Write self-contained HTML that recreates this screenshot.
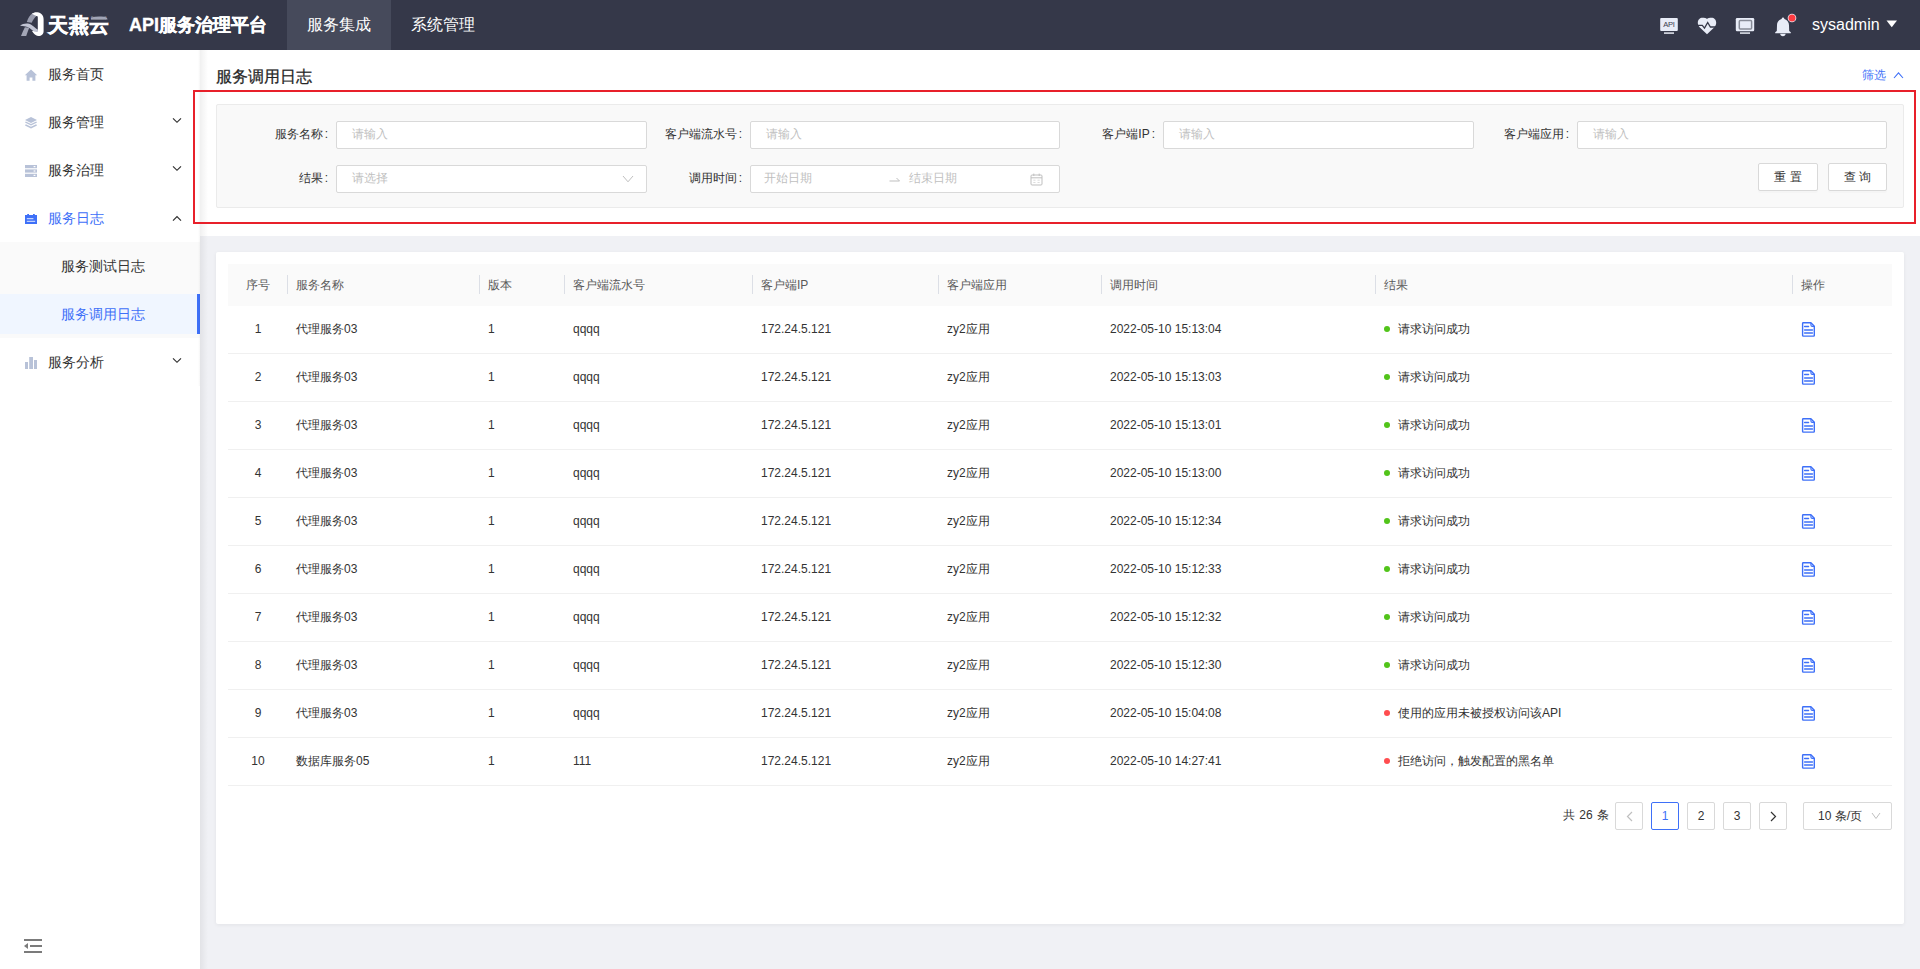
<!DOCTYPE html>
<html><head><meta charset="utf-8">
<style>
*{box-sizing:border-box;margin:0;padding:0}
html,body{width:1920px;height:969px;overflow:hidden;font-family:"Liberation Sans",sans-serif;background:#f0f1f5;color:#333}
.abs{position:absolute}
#hdr{position:absolute;left:0;top:0;width:1920px;height:50px;background:#353849}
#side{position:absolute;left:0;top:50px;width:200px;height:919px;background:#fff;z-index:2}
#sideshadow{position:absolute;left:200px;top:50px;width:8px;height:919px;background:linear-gradient(to right,rgba(0,0,0,.06),rgba(0,0,0,0));z-index:3}
.mi{position:absolute;left:0;width:200px;height:40px;line-height:40px;font-size:14px;color:#333}
.mi .t{position:absolute;left:48px;top:0}
.mi .ic{position:absolute;left:25px;top:14px;width:12px;height:12px}
.mi .ar{position:absolute;left:172px;top:16px;width:10px;height:8px}
#topp{position:absolute;left:200px;top:50px;width:1720px;height:186px;background:#fff}
.card{position:absolute;background:#fff;border-radius:2px}
.lbl{position:absolute;font-size:12px;color:#333;line-height:28px;text-align:right;margin-top:-1px}
.colon{margin:0 8px 0 2px}
.inp{position:absolute;height:28px;background:#fff;border:1px solid #d9d9d9;border-radius:2px;font-size:12px;color:#bfbfbf;line-height:24px;padding-left:15px}
.btn{position:absolute;height:28px;background:#fff;border:1px solid #d9d9d9;border-radius:2px;font-size:12px;color:#333;line-height:26px;text-align:center;box-shadow:0 2px 0 rgba(0,0,0,.015)}
.th{position:absolute;top:264px;height:42px;line-height:42px;font-size:12px;color:#595959}
.sep{position:absolute;top:275px;width:1px;height:19px;background:#dcdfe6}
.td{position:absolute;font-size:12px;color:#333;line-height:18px}
.rowb{position:absolute;left:228px;width:1664px;height:1px;background:#f0f0f0}
.pg{position:absolute;top:802px;width:28px;height:28px;border:1px solid #d9d9d9;border-radius:2px;background:#fff;font-size:12px;line-height:26px;text-align:center;color:#333}
</style></head><body>
<div id="hdr">
  <!-- logo -->
  <svg class="abs" style="left:18px;top:9px" width="28" height="30" viewBox="0 0 28 30">
    <path d="M8.8 12.9 C10 9.2 12 5.9 14.6 4.3 L18.6 7 C16.6 8.6 14.9 11 13.7 13.8 Z" fill="#9a9dae"/>
    <path d="M3 26.9 C4.2 23.8 5.4 21 6.9 18.3 L11.2 18.8 C10.2 21.4 9.2 24 8.2 26.9 Z" fill="#a3a6b6"/>
    <path d="M13.8 4.8 C15.5 3.4 17.5 3 19.5 3.3 C23.2 3.8 25.6 6.5 25.6 10.2 V22.2 C25.6 25.2 23.4 27 20.6 27 C18.4 27 16.6 25.8 15.2 23.8 L14 22 L19.8 21.4 V8.4 C19.8 7.2 19 6.6 18.2 7.1 Z" fill="#ffffff"/>
    <path d="M2 16.7 C5 14.4 10 13.7 13.6 15.9 C16 17.3 17.8 19.6 19.8 20.6 L19.8 22.9 C17.5 23.5 15.6 22.7 14 21.1 C12 19.1 10 17.9 7.6 17.5 C5.6 17.1 3.8 17 2 16.7 Z" fill="#c1c4d3"/>
  </svg>
  <div class="abs" style="left:48px;top:13px;font-size:20px;font-weight:bold;color:#fff;line-height:24px;letter-spacing:0.6px;-webkit-text-stroke:0.5px #fff">天燕云</div>
  <svg class="abs" style="left:88px;top:14px" width="22" height="8" viewBox="0 0 22 8"><path d="M3 3.2 C7 2.2 12 2.2 16 2.6 C18 2.8 19.2 3.2 19.6 5.4 C15 5 9 4.8 3 5.4 Z" fill="#353849"/><path d="M3 3.4 C7 2.4 12 2.4 16 2.8 C18 3 19.2 3.6 19.6 5.6 C15 5.2 9 5 3 5.6 Z" fill="#a1a5b6"/></svg>
  <div class="abs" style="left:129px;top:13px;font-size:18px;font-weight:bold;color:#fff;line-height:24px;-webkit-text-stroke:0.3px #fff">API服务治理平台</div>
  <div class="abs" style="left:287px;top:0;width:104px;height:50px;background:#464a5b"></div>
  <div class="abs" style="left:307px;top:0;font-size:16px;color:#fff;line-height:50px">服务集成</div>
  <div class="abs" style="left:411px;top:0;font-size:16px;color:#fff;line-height:50px">系统管理</div>
  <div class="abs" style="left:1812px;top:0;font-size:16px;color:#fff;line-height:50px">sysadmin</div>
  <svg class="abs" style="left:1660px;top:17px" width="18" height="18" viewBox="0 0 18 18">
    <rect x="0.2" y="1" width="17.6" height="13" rx="1" fill="#e8ecf7"/>
    <text x="9" y="10" text-anchor="middle" font-family="Liberation Sans" font-size="7.6" fill="#3c4050" letter-spacing="-0.3">API</text>
    <rect x="4" y="15.2" width="10" height="1.8" fill="#c9ccd6"/>
  </svg>
  <svg class="abs" style="left:1697px;top:17px" width="20" height="18" viewBox="0 0 20 18">
    <path d="M10 1.9 C8.8 1 7.4 0.8 5.6 0.8 C2.8 0.8 0.8 2.8 0.8 5.8 C0.8 7.6 1.6 9 2.6 10.2 L10 17.2 L17.4 10.2 C18.4 9 19.2 7.6 19.2 5.8 C19.2 2.8 17.2 0.8 14.4 0.8 C12.6 0.8 11.2 1 10 1.9 Z" fill="#e8ecf7"/>
    <path d="M0 8.4 H5.3 L7.5 11.1 L10.7 5.5 L13.4 10 H20" fill="none" stroke="#353849" stroke-width="1.3" stroke-linejoin="miter"/>
  </svg>
  <svg class="abs" style="left:1735px;top:17px" width="20" height="18" viewBox="0 0 20 18">
    <rect x="0.8" y="1" width="18.4" height="13.2" rx="1.2" fill="#e8ecf7"/>
    <rect x="4.3" y="3.5" width="12.3" height="8.6" rx="1" fill="none" stroke="#878b97" stroke-width="1.5"/>
    <rect x="5" y="15.2" width="10" height="1.8" fill="#c9ccd6"/>
  </svg>
  <svg class="abs" style="left:1773px;top:10px" width="26" height="28" viewBox="0 0 26 28">
    <path d="M10 7.6 C10.8 7.6 11.1 8.2 11.4 8.9 C14.4 9.9 16 12.2 16 15.2 L16.2 21 L17.8 22.2 V23.2 H2.2 V22.2 L3.8 21 L4 15.2 C4 12.2 5.6 9.9 8.6 8.9 C8.9 8.2 9.2 7.6 10 7.6 Z" fill="#e8ecf7"/>
    <path d="M7.2 23.8 H12.6 C12.6 25.5 11.5 26.2 9.9 26.2 C8.3 26.2 7.2 25.5 7.2 23.8 Z" fill="#e8ecf7"/>
    <circle cx="19" cy="8" r="4.3" fill="#e8ecf7"/>
    <circle cx="19" cy="8" r="3.5" fill="#ff3b41"/>
  </svg>
  <svg class="abs" style="left:1886px;top:20px" width="12" height="8" viewBox="0 0 12 8">
    <path d="M0.5 0.6 H11 L5.75 7.2 Z" fill="#fff"/>
  </svg>

</div>

<div id="side">
  <div class="mi" style="top:4px"><span class="t">服务首页</span></div>
  <div class="mi" style="top:52px"><span class="t">服务管理</span></div>
  <div class="mi" style="top:100px"><span class="t">服务治理</span></div>
  <div class="mi" style="top:148px;color:#3e70f8"><span class="t">服务日志</span></div>
  <div class="abs" style="left:0;top:192px;width:200px;height:96px;background:#fafafa"></div>
  <div class="mi" style="top:196px"><span class="t" style="left:61px">服务测试日志</span></div>
  <div class="mi" style="top:244px;background:#f0f6ff;color:#3e70f8"><span class="t" style="left:61px">服务调用日志</span><div class="abs" style="left:197px;top:0;width:3px;height:40px;background:#3e70f8"></div></div>
  <div class="mi" style="top:292px"><span class="t">服务分析</span></div>
<svg class="abs" style="left:24px;top:19px" width="14" height="12" viewBox="0 0 14 12"><path d="M7 0.4 L13.2 6.2 H11.4 V11.8 H8.4 V8.4 H5.6 V11.8 H2.6 V6.2 H0.8 Z" fill="#b8c2d8"/></svg><svg class="abs" style="left:25px;top:66px" width="12" height="13" viewBox="0 0 12 13"><path d="M6 1 L12 4 L6 7 L0 4 Z" fill="#b8c2d8"/><path d="M0.8 5.4 L6 8 L11.2 5.4 L12 6.6 L6 9.6 L0 6.6 Z" fill="#b8c2d8"/><path d="M0.8 8.2 L6 10.8 L11.2 8.2 L12 9.4 L6 12.4 L0 9.4 Z" fill="#b8c2d8"/></svg><svg class="abs" style="left:25px;top:115px" width="12" height="12" viewBox="0 0 12 12"><rect x="0" y="0" width="12" height="3.2" fill="#b8c2d8"/><rect x="0" y="4.4" width="12" height="3.2" fill="#b8c2d8"/><rect x="0" y="8.8" width="12" height="3.2" fill="#b8c2d8"/><rect x="8.6" y="1" width="1.8" height="1.2" fill="#fff"/><rect x="8.6" y="5.4" width="1.8" height="1.2" fill="#fff"/><rect x="8.6" y="9.8" width="1.8" height="1.2" fill="#fff"/></svg><svg class="abs" style="left:25px;top:163px" width="12" height="12" viewBox="0 0 12 12"><path d="M0 2 H2.2 V1 H4 V2 H8 V1 H9.8 V2 H12 V11 H0 Z" fill="#3e70f8"/><rect x="1.8" y="5.2" width="6.6" height="1" fill="#fff" opacity=".85"/><rect x="1.8" y="7.8" width="8.4" height="1" fill="#fff" opacity=".85"/></svg><svg class="abs" style="left:25px;top:307px" width="12" height="12" viewBox="0 0 12 12"><rect x="0" y="5" width="3" height="7" fill="#b8c2d8"/><rect x="4.2" y="0" width="3.8" height="12" fill="#b8c2d8"/><rect x="9" y="3" width="3" height="9" fill="#b8c2d8"/></svg><svg class="abs" style="left:172px;top:67px" width="10" height="7" viewBox="0 0 10 7"><path d="M1 1.3 L5 5.3 L9 1.3" fill="none" stroke="#2e2e2e" stroke-width="1.15"/></svg><svg class="abs" style="left:172px;top:115px" width="10" height="7" viewBox="0 0 10 7"><path d="M1 1.3 L5 5.3 L9 1.3" fill="none" stroke="#2e2e2e" stroke-width="1.15"/></svg><svg class="abs" style="left:172px;top:165px" width="10" height="7" viewBox="0 0 10 7"><path d="M1 5.6 L5 1.6 L9 5.6" fill="none" stroke="#2e2e2e" stroke-width="1.15"/></svg><svg class="abs" style="left:172px;top:307px" width="10" height="7" viewBox="0 0 10 7"><path d="M1 1.3 L5 5.3 L9 1.3" fill="none" stroke="#2e2e2e" stroke-width="1.15"/></svg>
</div>
<div id="sideshadow"></div>
<div class="abs" style="left:198px;top:50px;width:2px;height:336px;background:linear-gradient(to right,rgba(0,0,0,0),rgba(0,0,0,.035));z-index:3"></div>

<div id="topp">
  <div class="abs" style="left:16px;top:15px;font-size:16px;color:#262626;line-height:24px;-webkit-text-stroke:0.25px #262626">服务调用日志</div>
  <div class="abs" style="left:1662px;top:16px;font-size:12px;color:#3e70f8;line-height:18px">筛选</div><svg class="abs" style="left:1693px;top:21px" width="11" height="8" viewBox="0 0 11 8"><path d="M1 7 L5.5 1.8 L10 7" fill="none" stroke="#3e70f8" stroke-width="1.1"/></svg>
</div>

<!-- filter box -->
<div class="abs" style="left:216px;top:104px;width:1688px;height:104px;background:#f9f9f9;border:1px solid #ebebeb;border-radius:2px"></div>
<div class="lbl" style="left:226px;top:121px;width:110px">服务名称<span class="colon">:</span></div>
<div class="inp" style="left:336px;top:121px;width:311px">请输入</div>
<div class="lbl" style="left:640px;top:121px;width:110px">客户端流水号<span class="colon">:</span></div>
<div class="inp" style="left:750px;top:121px;width:310px">请输入</div>
<div class="lbl" style="left:1053px;top:121px;width:110px">客户端IP<span class="colon">:</span></div>
<div class="inp" style="left:1163px;top:121px;width:311px">请输入</div>
<div class="lbl" style="left:1467px;top:121px;width:110px">客户端应用<span class="colon">:</span></div>
<div class="inp" style="left:1577px;top:121px;width:310px">请输入</div>
<div class="lbl" style="left:226px;top:165px;width:110px">结果<span class="colon">:</span></div>
<div class="inp" style="left:336px;top:165px;width:311px">请选择<svg class="abs" style="left:285px;top:9px" width="12" height="8" viewBox="0 0 12 8"><path d="M1 1 L6 6.8 L11 1" fill="none" stroke="#bfbfbf" stroke-width="1"/></svg></div>
<div class="lbl" style="left:640px;top:165px;width:110px">调用时间<span class="colon">:</span></div>
<div class="inp" style="left:750px;top:165px;width:310px;padding-left:0"><span style="position:absolute;left:13px">开始日期</span><svg class="abs" style="left:138px;top:10px" width="12" height="6" viewBox="0 0 12 6"><path d="M0.5 5 H10.5 L7.5 2" fill="none" stroke="#bfbfbf" stroke-width="1"/></svg><span style="position:absolute;left:158px">结束日期</span><svg class="abs" style="left:279px;top:7px" width="13" height="13" viewBox="0 0 13 13"><rect x="1" y="2" width="11" height="10" rx="1" fill="none" stroke="#bfbfbf" stroke-width="1"/><path d="M1 4.8 H12 M3.8 0.6 V3 M9.2 0.6 V3" stroke="#bfbfbf" stroke-width="1"/><path d="M3.3 7.2 H5.5 M7.5 7.2 H9.7 M3.3 9.5 H5.5 M7.5 9.5 H9.7" stroke="#d9d9d9" stroke-width="0.9"/></svg></div>
<div class="btn" style="left:1758px;top:163px;width:60px">重 置</div>
<div class="btn" style="left:1828px;top:163px;width:59px">查 询</div>

<!-- red annotation -->
<div class="abs" style="left:193px;top:90px;width:1723px;height:134px;border:2px solid #e8202a;z-index:5"></div>

<!-- table card -->
<div class="card" style="left:216px;top:252px;width:1688px;height:672px;box-shadow:0 1px 4px rgba(0,0,0,.06)"></div>
<div class="abs" style="left:228px;top:264px;width:1664px;height:42px;background:#fafafa"></div>

<!-- pagination -->
<div class="abs" style="left:1563px;top:801px;font-size:12px;line-height:28px;color:#333;word-spacing:1px">共 26 条</div>
<div class="pg" style="left:1615px"><svg style="position:absolute;left:9px;top:8px" width="9" height="11" viewBox="0 0 9 11"><path d="M7 1 L2.5 5.5 L7 10" fill="none" stroke="#bfbfbf" stroke-width="1.2"/></svg></div>
<div class="pg" style="left:1651px;border-color:#3e70f8;color:#3e70f8">1</div>
<div class="pg" style="left:1687px">2</div>
<div class="pg" style="left:1723px">3</div>
<div class="pg" style="left:1759px"><svg style="position:absolute;left:9px;top:8px" width="9" height="11" viewBox="0 0 9 11"><path d="M2 1 L6.5 5.5 L2 10" fill="none" stroke="#333" stroke-width="1.2"/></svg></div>
<div class="pg" style="left:1803px;width:89px;text-align:left;padding-left:14px;color:#333">10 条/页<svg style="position:absolute;left:67px;top:9px" width="11" height="8" viewBox="0 0 11 8"><path d="M1 1 L5 6.5 L9 1" fill="none" stroke="#bfbfbf" stroke-width="1"/></svg></div>
<!-- collapse icon -->
<svg class="abs" style="left:24px;top:939px;z-index:4" width="18" height="14" viewBox="0 0 18 14"><rect x="0" y="0" width="18" height="2" fill="#7b7b7b"/><rect x="6" y="6" width="12" height="2" fill="#7b7b7b"/><rect x="0" y="12" width="18" height="2" fill="#7b7b7b"/><path d="M0 7 L4 4 V10 Z" fill="#7b7b7b"/></svg>
<!--TBL-->
<div class="th" style="left:228px;width:60px;text-align:center">序号</div>
<div class="th" style="left:296px">服务名称</div>
<div class="th" style="left:488px">版本</div>
<div class="th" style="left:573px">客户端流水号</div>
<div class="th" style="left:761px">客户端IP</div>
<div class="th" style="left:947px">客户端应用</div>
<div class="th" style="left:1110px">调用时间</div>
<div class="th" style="left:1384px">结果</div>
<div class="th" style="left:1801px">操作</div>
<div class="sep" style="left:287px"></div>
<div class="sep" style="left:479px"></div>
<div class="sep" style="left:564px"></div>
<div class="sep" style="left:752px"></div>
<div class="sep" style="left:938px"></div>
<div class="sep" style="left:1101px"></div>
<div class="sep" style="left:1375px"></div>
<div class="sep" style="left:1792px"></div>
<div class="td" style="left:228px;top:320px;width:60px;text-align:center">1</div>
<div class="td" style="left:296px;top:320px">代理服务03</div>
<div class="td" style="left:488px;top:320px">1</div>
<div class="td" style="left:573px;top:320px">qqqq</div>
<div class="td" style="left:761px;top:320px">172.24.5.121</div>
<div class="td" style="left:947px;top:320px">zy2应用</div>
<div class="td" style="left:1110px;top:320px">2022-05-10 15:13:04</div>
<div class="abs" style="left:1384px;top:326px;width:6px;height:6px;border-radius:50%;background:#52c41a"></div>
<div class="td" style="left:1398px;top:320px">请求访问成功</div>
<div class="abs" style="left:1801px;top:321px;width:15px;height:17px"><svg width="15" height="17" viewBox="0 0 15 17"><path d="M1.6 2.4 Q1.6 1.7 2.3 1.7 H9.9 L13.3 5.3 V14.4 Q13.3 15.1 12.6 15.1 H2.3 Q1.6 15.1 1.6 14.4 Z" fill="none" stroke="#3e70f8" stroke-width="1.4" stroke-linejoin="round"/><path d="M9.9 1.9 V4.1 Q9.9 5.4 11.2 5.4 H13.2" fill="none" stroke="#3e70f8" stroke-width="1.1"/><path d="M3.6 5.5 H7.6 M3.6 9 H11.5 M3.6 12 H11.5" stroke="#3e70f8" stroke-width="1.3" stroke-linecap="round"/></svg></div>
<div class="rowb" style="top:353px"></div>
<div class="td" style="left:228px;top:368px;width:60px;text-align:center">2</div>
<div class="td" style="left:296px;top:368px">代理服务03</div>
<div class="td" style="left:488px;top:368px">1</div>
<div class="td" style="left:573px;top:368px">qqqq</div>
<div class="td" style="left:761px;top:368px">172.24.5.121</div>
<div class="td" style="left:947px;top:368px">zy2应用</div>
<div class="td" style="left:1110px;top:368px">2022-05-10 15:13:03</div>
<div class="abs" style="left:1384px;top:374px;width:6px;height:6px;border-radius:50%;background:#52c41a"></div>
<div class="td" style="left:1398px;top:368px">请求访问成功</div>
<div class="abs" style="left:1801px;top:369px;width:15px;height:17px"><svg width="15" height="17" viewBox="0 0 15 17"><path d="M1.6 2.4 Q1.6 1.7 2.3 1.7 H9.9 L13.3 5.3 V14.4 Q13.3 15.1 12.6 15.1 H2.3 Q1.6 15.1 1.6 14.4 Z" fill="none" stroke="#3e70f8" stroke-width="1.4" stroke-linejoin="round"/><path d="M9.9 1.9 V4.1 Q9.9 5.4 11.2 5.4 H13.2" fill="none" stroke="#3e70f8" stroke-width="1.1"/><path d="M3.6 5.5 H7.6 M3.6 9 H11.5 M3.6 12 H11.5" stroke="#3e70f8" stroke-width="1.3" stroke-linecap="round"/></svg></div>
<div class="rowb" style="top:401px"></div>
<div class="td" style="left:228px;top:416px;width:60px;text-align:center">3</div>
<div class="td" style="left:296px;top:416px">代理服务03</div>
<div class="td" style="left:488px;top:416px">1</div>
<div class="td" style="left:573px;top:416px">qqqq</div>
<div class="td" style="left:761px;top:416px">172.24.5.121</div>
<div class="td" style="left:947px;top:416px">zy2应用</div>
<div class="td" style="left:1110px;top:416px">2022-05-10 15:13:01</div>
<div class="abs" style="left:1384px;top:422px;width:6px;height:6px;border-radius:50%;background:#52c41a"></div>
<div class="td" style="left:1398px;top:416px">请求访问成功</div>
<div class="abs" style="left:1801px;top:417px;width:15px;height:17px"><svg width="15" height="17" viewBox="0 0 15 17"><path d="M1.6 2.4 Q1.6 1.7 2.3 1.7 H9.9 L13.3 5.3 V14.4 Q13.3 15.1 12.6 15.1 H2.3 Q1.6 15.1 1.6 14.4 Z" fill="none" stroke="#3e70f8" stroke-width="1.4" stroke-linejoin="round"/><path d="M9.9 1.9 V4.1 Q9.9 5.4 11.2 5.4 H13.2" fill="none" stroke="#3e70f8" stroke-width="1.1"/><path d="M3.6 5.5 H7.6 M3.6 9 H11.5 M3.6 12 H11.5" stroke="#3e70f8" stroke-width="1.3" stroke-linecap="round"/></svg></div>
<div class="rowb" style="top:449px"></div>
<div class="td" style="left:228px;top:464px;width:60px;text-align:center">4</div>
<div class="td" style="left:296px;top:464px">代理服务03</div>
<div class="td" style="left:488px;top:464px">1</div>
<div class="td" style="left:573px;top:464px">qqqq</div>
<div class="td" style="left:761px;top:464px">172.24.5.121</div>
<div class="td" style="left:947px;top:464px">zy2应用</div>
<div class="td" style="left:1110px;top:464px">2022-05-10 15:13:00</div>
<div class="abs" style="left:1384px;top:470px;width:6px;height:6px;border-radius:50%;background:#52c41a"></div>
<div class="td" style="left:1398px;top:464px">请求访问成功</div>
<div class="abs" style="left:1801px;top:465px;width:15px;height:17px"><svg width="15" height="17" viewBox="0 0 15 17"><path d="M1.6 2.4 Q1.6 1.7 2.3 1.7 H9.9 L13.3 5.3 V14.4 Q13.3 15.1 12.6 15.1 H2.3 Q1.6 15.1 1.6 14.4 Z" fill="none" stroke="#3e70f8" stroke-width="1.4" stroke-linejoin="round"/><path d="M9.9 1.9 V4.1 Q9.9 5.4 11.2 5.4 H13.2" fill="none" stroke="#3e70f8" stroke-width="1.1"/><path d="M3.6 5.5 H7.6 M3.6 9 H11.5 M3.6 12 H11.5" stroke="#3e70f8" stroke-width="1.3" stroke-linecap="round"/></svg></div>
<div class="rowb" style="top:497px"></div>
<div class="td" style="left:228px;top:512px;width:60px;text-align:center">5</div>
<div class="td" style="left:296px;top:512px">代理服务03</div>
<div class="td" style="left:488px;top:512px">1</div>
<div class="td" style="left:573px;top:512px">qqqq</div>
<div class="td" style="left:761px;top:512px">172.24.5.121</div>
<div class="td" style="left:947px;top:512px">zy2应用</div>
<div class="td" style="left:1110px;top:512px">2022-05-10 15:12:34</div>
<div class="abs" style="left:1384px;top:518px;width:6px;height:6px;border-radius:50%;background:#52c41a"></div>
<div class="td" style="left:1398px;top:512px">请求访问成功</div>
<div class="abs" style="left:1801px;top:513px;width:15px;height:17px"><svg width="15" height="17" viewBox="0 0 15 17"><path d="M1.6 2.4 Q1.6 1.7 2.3 1.7 H9.9 L13.3 5.3 V14.4 Q13.3 15.1 12.6 15.1 H2.3 Q1.6 15.1 1.6 14.4 Z" fill="none" stroke="#3e70f8" stroke-width="1.4" stroke-linejoin="round"/><path d="M9.9 1.9 V4.1 Q9.9 5.4 11.2 5.4 H13.2" fill="none" stroke="#3e70f8" stroke-width="1.1"/><path d="M3.6 5.5 H7.6 M3.6 9 H11.5 M3.6 12 H11.5" stroke="#3e70f8" stroke-width="1.3" stroke-linecap="round"/></svg></div>
<div class="rowb" style="top:545px"></div>
<div class="td" style="left:228px;top:560px;width:60px;text-align:center">6</div>
<div class="td" style="left:296px;top:560px">代理服务03</div>
<div class="td" style="left:488px;top:560px">1</div>
<div class="td" style="left:573px;top:560px">qqqq</div>
<div class="td" style="left:761px;top:560px">172.24.5.121</div>
<div class="td" style="left:947px;top:560px">zy2应用</div>
<div class="td" style="left:1110px;top:560px">2022-05-10 15:12:33</div>
<div class="abs" style="left:1384px;top:566px;width:6px;height:6px;border-radius:50%;background:#52c41a"></div>
<div class="td" style="left:1398px;top:560px">请求访问成功</div>
<div class="abs" style="left:1801px;top:561px;width:15px;height:17px"><svg width="15" height="17" viewBox="0 0 15 17"><path d="M1.6 2.4 Q1.6 1.7 2.3 1.7 H9.9 L13.3 5.3 V14.4 Q13.3 15.1 12.6 15.1 H2.3 Q1.6 15.1 1.6 14.4 Z" fill="none" stroke="#3e70f8" stroke-width="1.4" stroke-linejoin="round"/><path d="M9.9 1.9 V4.1 Q9.9 5.4 11.2 5.4 H13.2" fill="none" stroke="#3e70f8" stroke-width="1.1"/><path d="M3.6 5.5 H7.6 M3.6 9 H11.5 M3.6 12 H11.5" stroke="#3e70f8" stroke-width="1.3" stroke-linecap="round"/></svg></div>
<div class="rowb" style="top:593px"></div>
<div class="td" style="left:228px;top:608px;width:60px;text-align:center">7</div>
<div class="td" style="left:296px;top:608px">代理服务03</div>
<div class="td" style="left:488px;top:608px">1</div>
<div class="td" style="left:573px;top:608px">qqqq</div>
<div class="td" style="left:761px;top:608px">172.24.5.121</div>
<div class="td" style="left:947px;top:608px">zy2应用</div>
<div class="td" style="left:1110px;top:608px">2022-05-10 15:12:32</div>
<div class="abs" style="left:1384px;top:614px;width:6px;height:6px;border-radius:50%;background:#52c41a"></div>
<div class="td" style="left:1398px;top:608px">请求访问成功</div>
<div class="abs" style="left:1801px;top:609px;width:15px;height:17px"><svg width="15" height="17" viewBox="0 0 15 17"><path d="M1.6 2.4 Q1.6 1.7 2.3 1.7 H9.9 L13.3 5.3 V14.4 Q13.3 15.1 12.6 15.1 H2.3 Q1.6 15.1 1.6 14.4 Z" fill="none" stroke="#3e70f8" stroke-width="1.4" stroke-linejoin="round"/><path d="M9.9 1.9 V4.1 Q9.9 5.4 11.2 5.4 H13.2" fill="none" stroke="#3e70f8" stroke-width="1.1"/><path d="M3.6 5.5 H7.6 M3.6 9 H11.5 M3.6 12 H11.5" stroke="#3e70f8" stroke-width="1.3" stroke-linecap="round"/></svg></div>
<div class="rowb" style="top:641px"></div>
<div class="td" style="left:228px;top:656px;width:60px;text-align:center">8</div>
<div class="td" style="left:296px;top:656px">代理服务03</div>
<div class="td" style="left:488px;top:656px">1</div>
<div class="td" style="left:573px;top:656px">qqqq</div>
<div class="td" style="left:761px;top:656px">172.24.5.121</div>
<div class="td" style="left:947px;top:656px">zy2应用</div>
<div class="td" style="left:1110px;top:656px">2022-05-10 15:12:30</div>
<div class="abs" style="left:1384px;top:662px;width:6px;height:6px;border-radius:50%;background:#52c41a"></div>
<div class="td" style="left:1398px;top:656px">请求访问成功</div>
<div class="abs" style="left:1801px;top:657px;width:15px;height:17px"><svg width="15" height="17" viewBox="0 0 15 17"><path d="M1.6 2.4 Q1.6 1.7 2.3 1.7 H9.9 L13.3 5.3 V14.4 Q13.3 15.1 12.6 15.1 H2.3 Q1.6 15.1 1.6 14.4 Z" fill="none" stroke="#3e70f8" stroke-width="1.4" stroke-linejoin="round"/><path d="M9.9 1.9 V4.1 Q9.9 5.4 11.2 5.4 H13.2" fill="none" stroke="#3e70f8" stroke-width="1.1"/><path d="M3.6 5.5 H7.6 M3.6 9 H11.5 M3.6 12 H11.5" stroke="#3e70f8" stroke-width="1.3" stroke-linecap="round"/></svg></div>
<div class="rowb" style="top:689px"></div>
<div class="td" style="left:228px;top:704px;width:60px;text-align:center">9</div>
<div class="td" style="left:296px;top:704px">代理服务03</div>
<div class="td" style="left:488px;top:704px">1</div>
<div class="td" style="left:573px;top:704px">qqqq</div>
<div class="td" style="left:761px;top:704px">172.24.5.121</div>
<div class="td" style="left:947px;top:704px">zy2应用</div>
<div class="td" style="left:1110px;top:704px">2022-05-10 15:04:08</div>
<div class="abs" style="left:1384px;top:710px;width:6px;height:6px;border-radius:50%;background:#ff4d4f"></div>
<div class="td" style="left:1398px;top:704px">使用的应用未被授权访问该API</div>
<div class="abs" style="left:1801px;top:705px;width:15px;height:17px"><svg width="15" height="17" viewBox="0 0 15 17"><path d="M1.6 2.4 Q1.6 1.7 2.3 1.7 H9.9 L13.3 5.3 V14.4 Q13.3 15.1 12.6 15.1 H2.3 Q1.6 15.1 1.6 14.4 Z" fill="none" stroke="#3e70f8" stroke-width="1.4" stroke-linejoin="round"/><path d="M9.9 1.9 V4.1 Q9.9 5.4 11.2 5.4 H13.2" fill="none" stroke="#3e70f8" stroke-width="1.1"/><path d="M3.6 5.5 H7.6 M3.6 9 H11.5 M3.6 12 H11.5" stroke="#3e70f8" stroke-width="1.3" stroke-linecap="round"/></svg></div>
<div class="rowb" style="top:737px"></div>
<div class="td" style="left:228px;top:752px;width:60px;text-align:center">10</div>
<div class="td" style="left:296px;top:752px">数据库服务05</div>
<div class="td" style="left:488px;top:752px">1</div>
<div class="td" style="left:573px;top:752px">111</div>
<div class="td" style="left:761px;top:752px">172.24.5.121</div>
<div class="td" style="left:947px;top:752px">zy2应用</div>
<div class="td" style="left:1110px;top:752px">2022-05-10 14:27:41</div>
<div class="abs" style="left:1384px;top:758px;width:6px;height:6px;border-radius:50%;background:#ff4d4f"></div>
<div class="td" style="left:1398px;top:752px">拒绝访问，触发配置的黑名单</div>
<div class="abs" style="left:1801px;top:753px;width:15px;height:17px"><svg width="15" height="17" viewBox="0 0 15 17"><path d="M1.6 2.4 Q1.6 1.7 2.3 1.7 H9.9 L13.3 5.3 V14.4 Q13.3 15.1 12.6 15.1 H2.3 Q1.6 15.1 1.6 14.4 Z" fill="none" stroke="#3e70f8" stroke-width="1.4" stroke-linejoin="round"/><path d="M9.9 1.9 V4.1 Q9.9 5.4 11.2 5.4 H13.2" fill="none" stroke="#3e70f8" stroke-width="1.1"/><path d="M3.6 5.5 H7.6 M3.6 9 H11.5 M3.6 12 H11.5" stroke="#3e70f8" stroke-width="1.3" stroke-linecap="round"/></svg></div>
<div class="rowb" style="top:785px"></div>
<!--/TBL-->
</body></html>
